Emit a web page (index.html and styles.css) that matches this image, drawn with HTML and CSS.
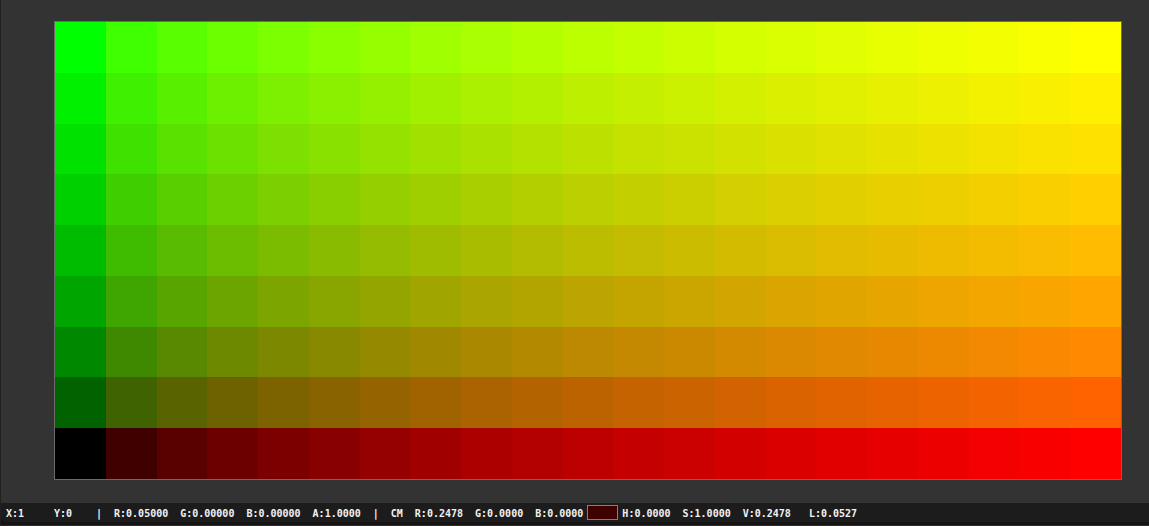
FILE: index.html
```html
<!DOCTYPE html>
<html lang="en">
<head>
<meta charset="utf-8">
<title>Image Viewer</title>
<link rel="stylesheet" href="styles.css">
</head>
<body>
<div class="editor">
<main class="viewport">
<div class="swatches" id="swatches" role="img" aria-label="Red and green gradient steps"></div>
</main>
<footer class="status">
<span class="pixel-x">X:1</span>
<span class="pixel-y">Y:0</span>
<span>|</span>
<span>R:0.05000</span>
<span>G:0.00000</span>
<span>B:0.00000</span>
<span>A:1.0000</span>
<span>|</span>
<span>CM</span>
<span>R:0.2478</span>
<span>G:0.0000</span>
<div class="sample"><span>B:0.0000</span><i class="chip"></i><span>H:0.0000</span></div>
<span>S:1.0000</span>
<span class="value">V:0.2478</span>
<span>L:0.0527</span>
</footer>
</div>
<script src="script.js"></script>
</body>
</html>
```
FILE: styles.css
```css
* {
  box-sizing: border-box;
}

body {
  margin: 0;
  background: #2b2b2b;
}

.editor {
  display: flex;
  flex-direction: column;
  height: 100vh;
  border-left: 1px solid #202020;
  border-bottom: 1px solid #2b2b2b;
  background: #151313;
}

.viewport {
  flex: 1;
  display: flex;
  background: #333333;
  padding: 21px 27px 23px 53px;
}

.swatches {
  flex: 1;
  display: grid;
  grid-template-columns: repeat(21, 1fr);
  grid-template-rows: repeat(9, 1fr);
  border: 1px solid #6a6a6a;
}

.status {
  display: flex;
  align-items: center;
  gap: 12px;
  height: 19px;
  margin-bottom: 3px;
  padding: 0 5px;
  border-bottom-left-radius: 5px;
  background: #1c1c1c;
  color: #f2f2f2;
  font: bold 10px/17px "DejaVu Sans Mono", monospace;
  white-space: nowrap;
}

.status span {
  padding-top: 2px;
}

.pixel-x {
  width: 36px;
}

.pixel-y {
  width: 30px;
}

.sample {
  display: flex;
  align-items: center;
  gap: 4px;
}

.chip {
  width: 31px;
  height: 15px;
  border: 1px solid #808080;
  background: #3f0000;
}

.value {
  margin-right: 6px;
}
```
FILE: script.js
```js
const encode = (v) =>
  Math.round(255 * (v <= 0.0031308 ? 12.92 * v : 1.055 * Math.pow(v, 1 / 2.4) - 0.055));

const grid = document.getElementById("swatches");
for (let row = 8; row >= 0; row--) {
  for (let col = 0; col <= 20; col++) {
    const cell = document.createElement("div");
    cell.style.backgroundColor = `rgb(${encode(col / 20)}, ${encode(row / 8)}, 0)`;
    grid.appendChild(cell);
  }
}
```
